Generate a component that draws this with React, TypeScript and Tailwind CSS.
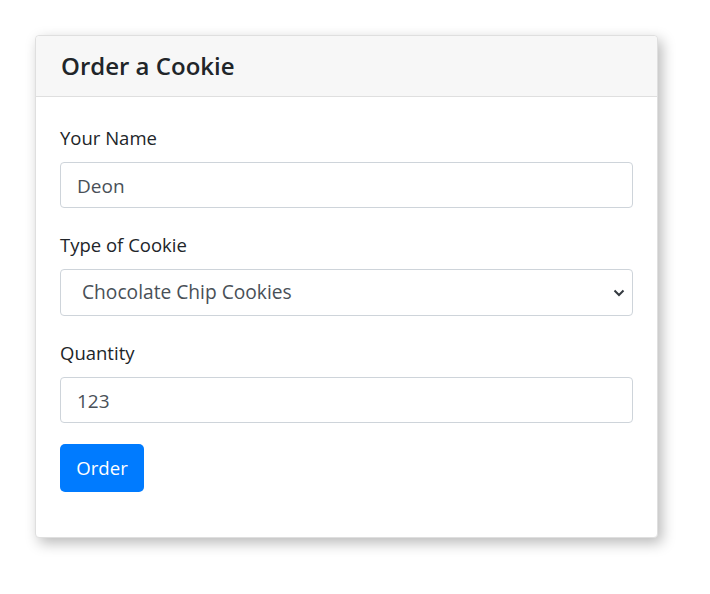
import React, { useState } from 'react';

const font = { fontFamily: '"Open Sans", "Noto Sans", Arial, sans-serif' };

export default function App() {
    const [name, setName] = useState('Deon');
    const [cookie, setCookie] = useState('Chocolate Chip Cookies');
    const [qty, setQty] = useState('123');

    return (
        <div className="min-h-screen bg-white pt-[35px] pl-[35px]" style={font}>
            <div className="w-[623px] rounded-[4px] border border-[#dfdfdf] bg-white shadow-[4px_5px_14px_rgba(0,0,0,0.28)]">
                <div className="flex h-[61px] items-center rounded-t-[4px] border-b border-[#dfdfdf] bg-[#f7f7f7] px-[25px]">
                    <h1 className="text-[24px] font-semibold leading-none text-[#212529]">Order a Cookie</h1>
                </div>
                <form className="px-[24px] pt-[27px] pb-[45px]" onSubmit={e => e.preventDefault()}>
                    <div className="mb-[23px]">
                        <label className="mb-[10px] block text-[18.5px] leading-[28px] text-[#212529]">Your Name</label>
                        <input
                            value={name}
                            onChange={e => setName(e.target.value)}
                            className="block h-[46px] w-full rounded-[4px] border border-[#ced4da] px-[16px] pt-[2px] text-[19px] text-[#495057] outline-none"
                        />
                    </div>
                    <div className="mb-[23px]">
                        <label className="mb-[10px] block text-[18.5px] leading-[28px] text-[#212529]">Type of Cookie</label>
                        <div className="relative">
                            <select
                                value={cookie}
                                onChange={e => setCookie(e.target.value)}
                                className="block h-[47px] w-full appearance-none rounded-[4px] border border-[#ced4da] bg-white pl-[21px] text-[19.2px] text-[#495057] outline-none"
                            >
                                <option>Chocolate Chip Cookies</option>
                                <option>Oatmeal Raisin Cookies</option>
                                <option>Sugar Cookies</option>
                            </select>
                            <svg className="pointer-events-none absolute right-[8px] top-[20px]" width="12" height="8" viewBox="0 0 12 8">
                                <path d="M1.5 1.5 L6 6 L10.5 1.5" fill="none" stroke="#343a40" strokeWidth="2" />
                            </svg>
                        </div>
                    </div>
                    <div className="mb-[21px]">
                        <label className="mb-[10px] block text-[18.5px] leading-[28px] text-[#212529]">Quantity</label>
                        <input
                            value={qty}
                            onChange={e => setQty(e.target.value)}
                            className="block h-[46px] w-full rounded-[4px] border border-[#ced4da] px-[16px] pt-[2px] text-[19px] text-[#495057] outline-none"
                        />
                    </div>
                    <button type="submit" className="h-[48px] w-[84px] rounded-[5px] bg-[#007bff] text-[18.6px] text-white">
                        Order
                    </button>
                </form>
            </div>
        </div>
    );
}
